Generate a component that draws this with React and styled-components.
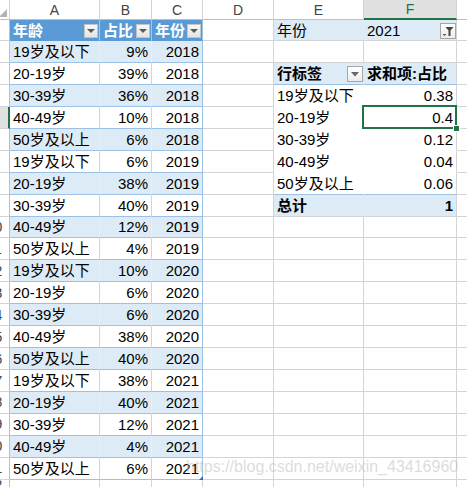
import React from "react";
import styled, { createGlobalStyle, css } from "styled-components";

const GRID = "#d4d4d4";
const BLUE_LINE = "#9bc2e6";
const BAND = "#ddebf7";
const HEAD = "#5b9bd5";
const GREEN = "#217346";

const GlobalStyle = createGlobalStyle`
  html, body {
    margin: 0;
    padding: 0;
    background: #fff;
    overflow: hidden;
  }
  body {
    font-family: "Liberation Sans", "Noto Sans CJK SC", sans-serif;
  }
`;

const Page = styled.div`
  position: relative;
  width: 467px;
  height: 487px;
  overflow: hidden;
`;

const Sheet = styled.div`
  display: grid;
  grid-template-columns: 30px 90px 52px 51px 71px 90px 93px 40px;
  grid-template-rows: 20px 21px repeat(20, 21.95px) 12px;
  margin-left: -20px;
  font-size: 15px;
  line-height: 18px;
`;

const Corner = styled.div`
  box-sizing: border-box;
  display: flex;
  justify-content: flex-end;
  align-items: flex-end;
  padding: 0 2px 2px 0;
  border-right: 1px solid ${GRID};
  border-bottom: 1px solid #bfbfbf;
  &::after {
    content: "";
    width: 0;
    height: 0;
    border-left: 8px solid transparent;
    border-bottom: 8px solid #b4b4b4;
  }
`;

const ColHeader = styled.div`
  box-sizing: border-box;
  display: flex;
  justify-content: center;
  align-items: center;
  font-size: 14px;
  color: ${(p) => (p.$active ? GREEN : "#444")};
  background: ${(p) => (p.$active ? "#e1e1e1" : "#fff")};
  border-right: 1px solid ${GRID};
  border-bottom: ${(p) => (p.$active ? `2px solid ${GREEN}` : "1px solid #bfbfbf")};
`;

const RowHeader = styled.div`
  box-sizing: border-box;
  display: flex;
  justify-content: center;
  align-items: center;
  font-size: 14px;
  color: #444;
  background: ${(p) => (p.$active ? "#e1e1e1" : "#fff")};
  border-right: ${(p) => (p.$active ? `2px solid ${GREEN}` : "1px solid #bfbfbf")};
  border-bottom: 1px solid ${GRID};
`;

const kinds = {
  plain: { bg: "#fff", vr: GRID, hr: GRID },
  thead: { bg: HEAD, vr: "#a7c7e7", hr: HEAD, color: "#fff", bold: true },
  band: { bg: BAND, vr: "#e9eef4", hr: BLUE_LINE },
  row: { bg: "#fff", vr: GRID, hr: BLUE_LINE },
  pfilter: { bg: BAND, vr: BAND, hr: GRID },
  phead: { bg: BAND, vr: BAND, hr: BLUE_LINE, bold: true },
  pbody: { bg: "#fff", vr: "#fff", hr: "#fff" },
  plast: { bg: "#fff", vr: "#fff", hr: BLUE_LINE },
  ptotal: { bg: BAND, vr: BAND, hr: GRID, bold: true },
};

const Cell = styled.div`
  box-sizing: border-box;
  position: relative;
  display: flex;
  align-items: center;
  justify-content: ${(p) => (p.$right ? "flex-end" : "flex-start")};
  padding: 1px 3px 0 3px;
  white-space: nowrap;
  background: ${(p) => kinds[p.$kind].bg};
  color: ${(p) => kinds[p.$kind].color || "#000"};
  font-weight: ${(p) => (kinds[p.$kind].bold ? 700 : 400)};
  border-right: 1px solid ${(p) => p.$edge || kinds[p.$kind].vr};
  border-bottom: 1px solid ${(p) => kinds[p.$kind].hr};

  ${(p) =>
    p.$selected &&
    css`
      &::after {
        content: "";
        position: absolute;
        top: -2px;
        left: -2px;
        right: -1px;
        bottom: -1px;
        border: 2px solid ${GREEN};
      }
      &::before {
        content: "";
        position: absolute;
        right: -4px;
        bottom: -4px;
        width: 5px;
        height: 5px;
        background: ${GREEN};
        border: 1px solid #fff;
        z-index: 2;
      }
    `}

  ${(p) =>
    p.$resize &&
    css`
      &::after {
        content: "";
        position: absolute;
        right: -1px;
        bottom: -1px;
        width: 0;
        height: 0;
        border-left: 4px solid transparent;
        border-bottom: 4px solid #3b5fc4;
      }
    `}
`;

const TableArrow = styled.span`
  box-sizing: border-box;
  display: flex;
  align-items: center;
  justify-content: center;
  width: 14px;
  height: 14px;
  margin-left: auto;
  margin-right: -2px;
  margin-top: 1px;
  background: linear-gradient(#f8f8f8, #e4e4e4);
  border: 1px solid #c4c4c4;
  &::after {
    content: "";
    border-left: 4px solid transparent;
    border-right: 4px solid transparent;
    border-top: 4px solid #5a5a5a;
  }
`;

const PivotButton = styled.span`
  box-sizing: border-box;
  display: flex;
  align-items: center;
  justify-content: center;
  width: 16px;
  height: 16px;
  margin-left: auto;
  margin-right: -3px;
  margin-top: 1px;
  background: linear-gradient(#ffffff, #ececec);
  border: 1px solid #a6a6a6;
  color: #555;
`;

const Watermark = styled.div`
  position: absolute;
  left: 186px;
  top: 458px;
  font-family: "Liberation Sans", sans-serif;
  font-size: 16px;
  color: rgba(185, 185, 185, 0.5);
  white-space: nowrap;
  pointer-events: none;
`;

const DownTriangle = () => (
  <svg width="8" height="5" viewBox="0 0 8 5">
    <path d="M0 0h8L4 4.5z" fill="#666" />
  </svg>
);

const FunnelIcon = () => (
  <svg width="12" height="11" viewBox="0 0 12 11">
    <path d="M0.5 8h4L2.5 10z" fill="#555" />
    <path d="M3.5 1h8L8.5 4.5V10h-2V4.5z" fill="#444" />
  </svg>
);

const TABLE = [
  ["19岁及以下", "9%", "2018"],
  ["20-19岁", "39%", "2018"],
  ["30-39岁", "36%", "2018"],
  ["40-49岁", "10%", "2018"],
  ["50岁及以上", "6%", "2018"],
  ["19岁及以下", "6%", "2019"],
  ["20-19岁", "38%", "2019"],
  ["30-39岁", "40%", "2019"],
  ["40-49岁", "12%", "2019"],
  ["50岁及以上", "4%", "2019"],
  ["19岁及以下", "10%", "2020"],
  ["20-19岁", "6%", "2020"],
  ["30-39岁", "6%", "2020"],
  ["40-49岁", "38%", "2020"],
  ["50岁及以上", "40%", "2020"],
  ["19岁及以下", "38%", "2021"],
  ["20-19岁", "40%", "2021"],
  ["30-39岁", "12%", "2021"],
  ["40-49岁", "4%", "2021"],
  ["50岁及以上", "6%", "2021"],
];

const PIVOT = {
  4: ["19岁及以下", "0.38"],
  5: ["20-19岁", "0.4"],
  6: ["30-39岁", "0.12"],
  7: ["40-49岁", "0.04"],
  8: ["50岁及以上", "0.06"],
};

const COLS = ["A", "B", "C", "D", "E", "F", "G"];

function tableCells(r) {
  if (r === 1) {
    return [
      <Cell key="A" $kind="thead">年龄<TableArrow /></Cell>,
      <Cell key="B" $kind="thead">占比<TableArrow /></Cell>,
      <Cell key="C" $kind="thead" $edge={BLUE_LINE}>年份<TableArrow /></Cell>,
    ];
  }
  const data = TABLE[r - 2];
  if (!data) {
    return ["A", "B", "C"].map((c) => <Cell key={c} $kind="plain" />);
  }
  const kind = r % 2 === 0 ? "band" : "row";
  const last = r === TABLE.length + 1;
  return [
    <Cell key="A" $kind={kind}>{data[0]}</Cell>,
    <Cell key="B" $kind={kind} $right>{data[1]}</Cell>,
    <Cell key="C" $kind={kind} $right $edge={BLUE_LINE} $resize={last}>{data[2]}</Cell>,
  ];
}

function pivotCells(r) {
  if (r === 1) {
    return [
      <Cell key="E" $kind="pfilter">年份</Cell>,
      <Cell key="F" $kind="pfilter" $edge={GRID}>
        2021
        <PivotButton><FunnelIcon /></PivotButton>
      </Cell>,
    ];
  }
  if (r === 3) {
    return [
      <Cell key="E" $kind="phead">
        行标签
        <PivotButton><DownTriangle /></PivotButton>
      </Cell>,
      <Cell key="F" $kind="phead" $edge={GRID}>求和项:占比</Cell>,
    ];
  }
  if (PIVOT[r]) {
    const kind = r === 8 ? "plast" : "pbody";
    return [
      <Cell key="E" $kind={kind}>{PIVOT[r][0]}</Cell>,
      <Cell key="F" $kind={kind} $right $edge={GRID} $selected={r === 5}>
        {PIVOT[r][1]}
      </Cell>,
    ];
  }
  if (r === 9) {
    return [
      <Cell key="E" $kind="ptotal">总计</Cell>,
      <Cell key="F" $kind="ptotal" $right $edge={GRID}>1</Cell>,
    ];
  }
  return [<Cell key="E" $kind="plain" />, <Cell key="F" $kind="plain" />];
}

export default function App() {
  const rows = [];
  for (let r = 1; r <= 22; r++) {
    rows.push(
      <RowHeader key={`h${r}`} $active={r === 5}>{r}</RowHeader>,
      ...tableCells(r),
      <Cell key={`D${r}`} $kind="plain" />,
      ...pivotCells(r).map((el) => React.cloneElement(el, { key: `${el.key}${r}` })),
      <Cell key={`G${r}`} $kind="plain" />
    );
  }

  return (
    <Page>
      <GlobalStyle />
      <Sheet>
        <Corner />
        {COLS.map((c) => (
          <ColHeader key={c} $active={c === "F"}>{c}</ColHeader>
        ))}
        {rows.map((el, i) => React.cloneElement(el, { key: `${el.key}-${i}` }))}
      </Sheet>
      <Watermark>https://blog.csdn.net/weixin_43416960</Watermark>
    </Page>
  );
}
